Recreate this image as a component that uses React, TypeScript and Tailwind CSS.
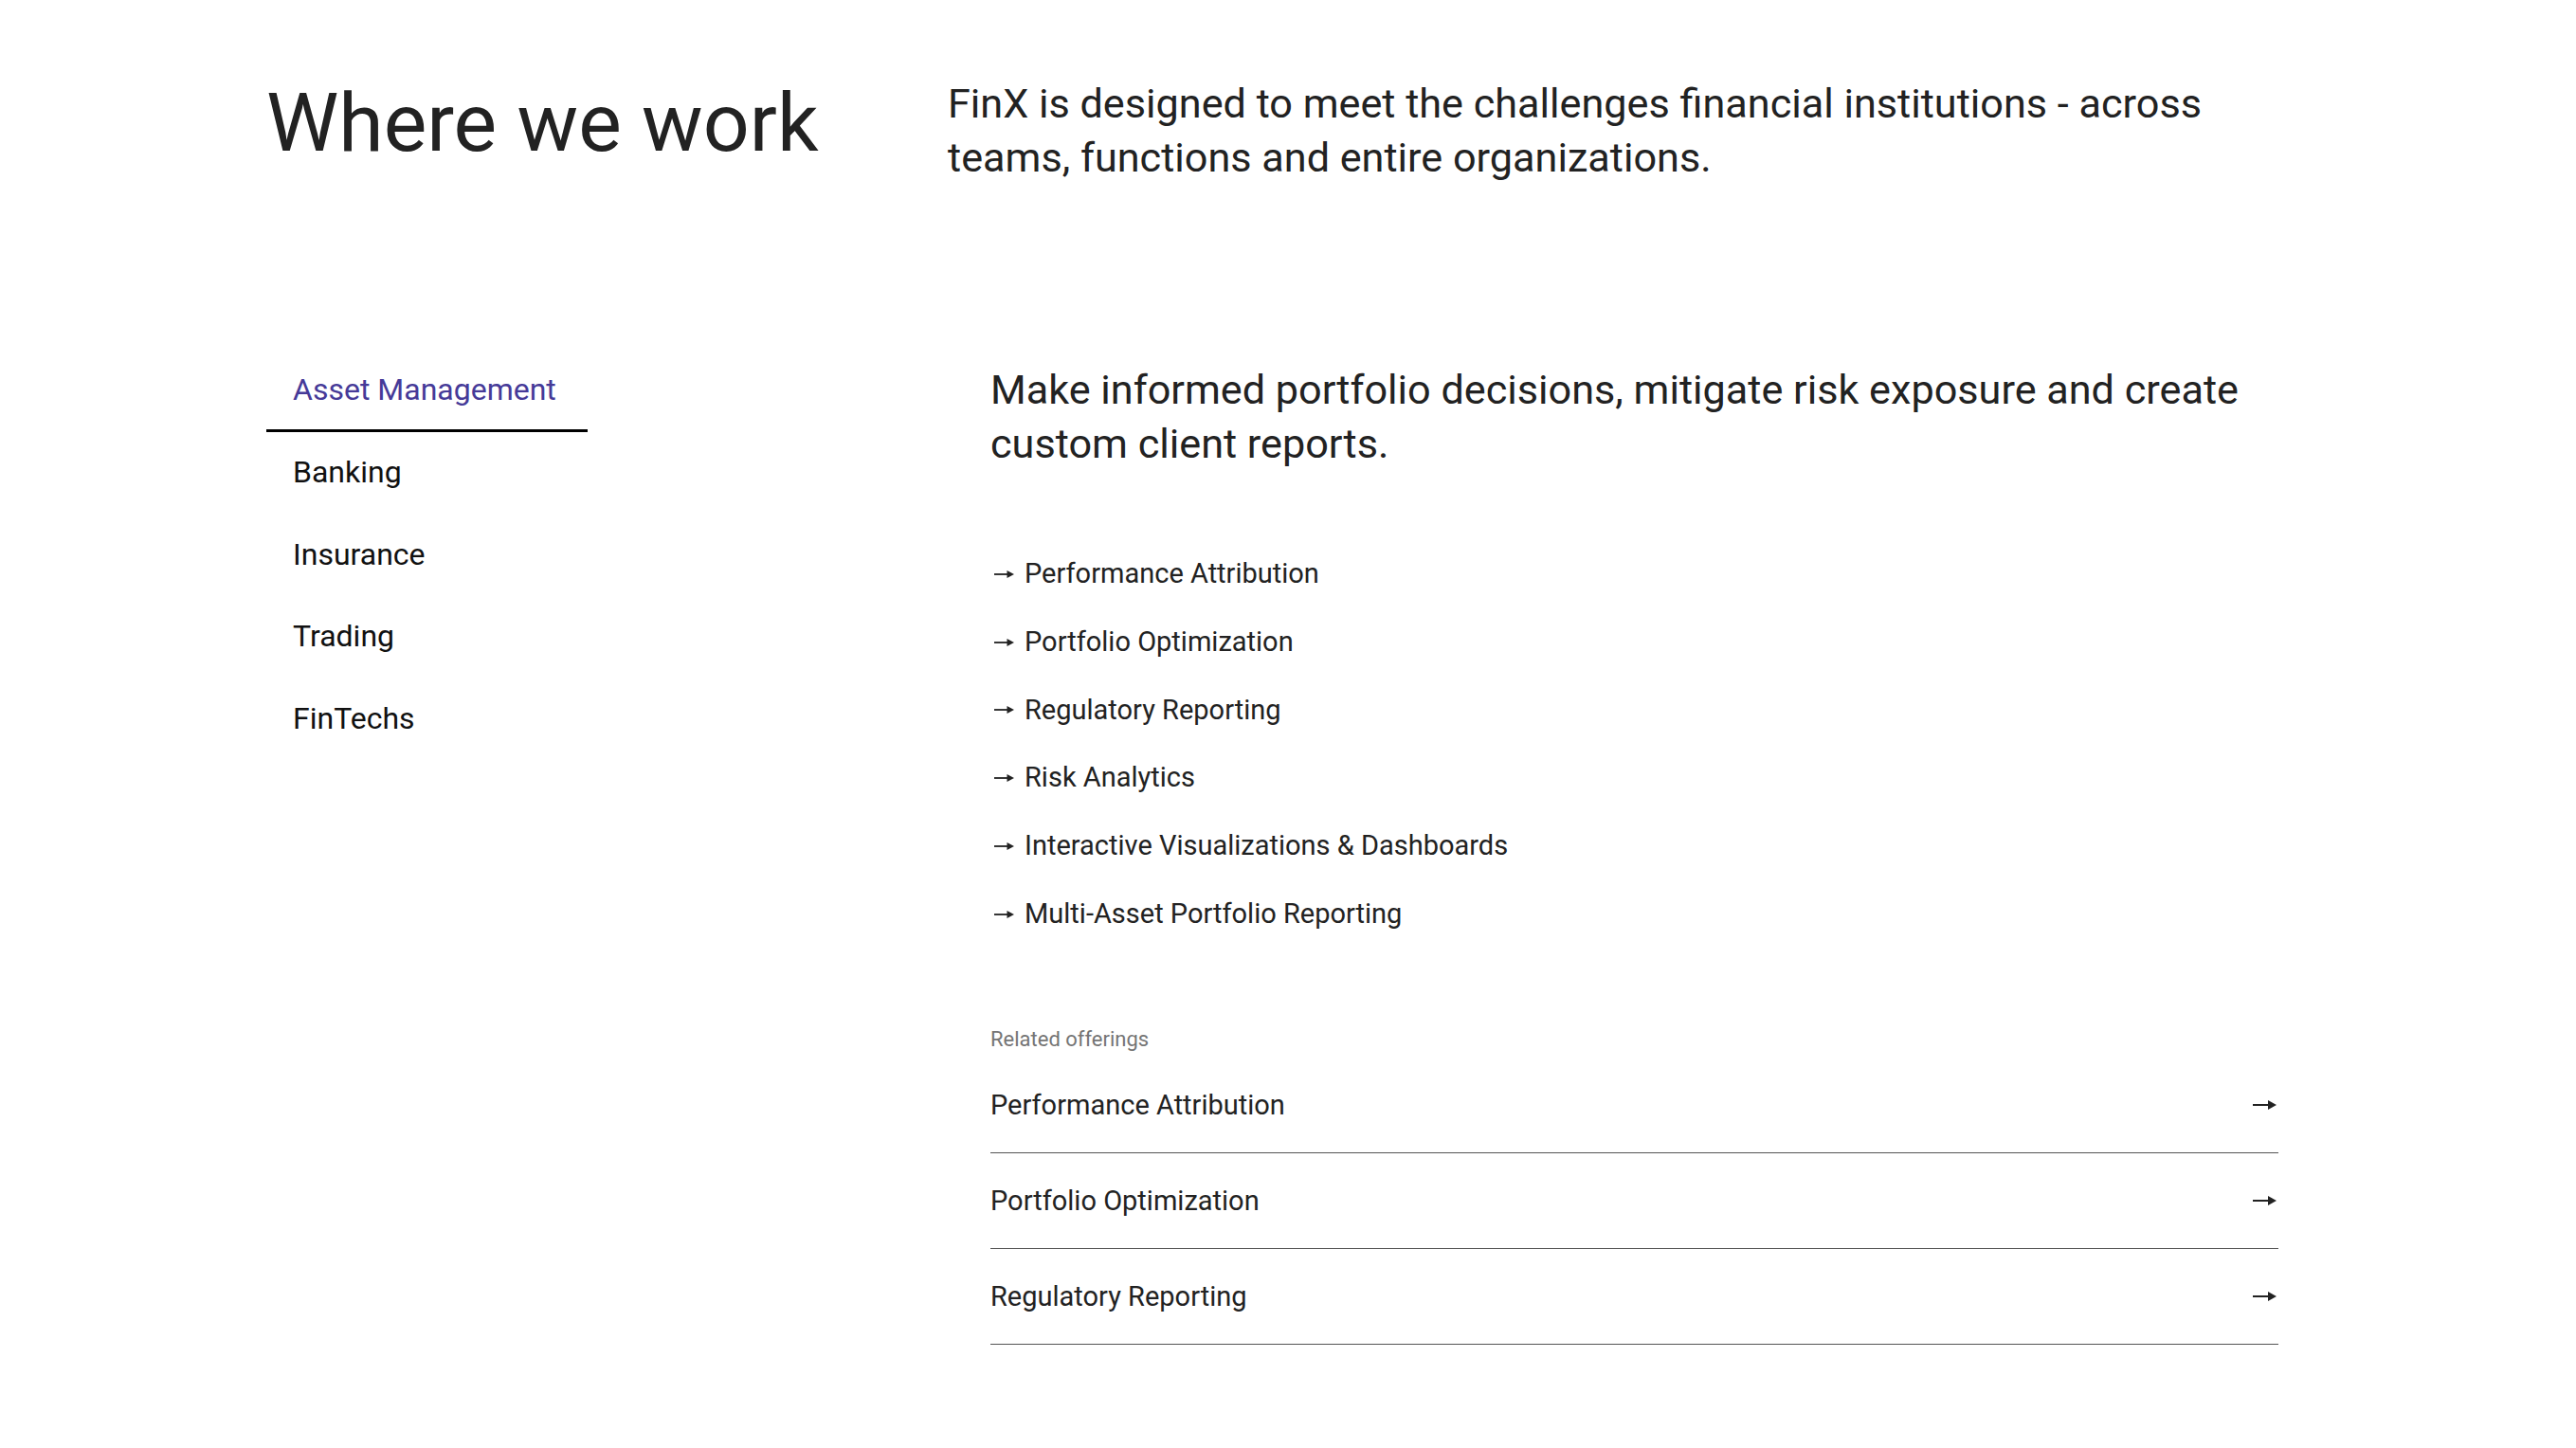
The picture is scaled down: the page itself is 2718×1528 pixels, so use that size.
import React from "react";

const navItems = ["Asset Management", "Banking", "Insurance", "Trading", "FinTechs"];
const bullets = [
  "Performance Attribution",
  "Portfolio Optimization",
  "Regulatory Reporting",
  "Risk Analytics",
  "Interactive Visualizations & Dashboards",
  "Multi-Asset Portfolio Reporting",
];
const related = ["Performance Attribution", "Portfolio Optimization", "Regulatory Reporting"];

function ArrowRight() {
  return (
    <svg width="25" height="12" viewBox="0 0 25 12" className="shrink-0">
      <rect x="0" y="5" width="18" height="2" fill="#222" />
      <path d="M16 1 L25 6 L16 11 Z" fill="#222" />
    </svg>
  );
}

function BulletArrow() {
  return (
    <svg width="21" height="10" viewBox="0 0 21 10" className="ml-[4px] mr-[11px] shrink-0">
      <rect x="0" y="4.1" width="15" height="1.8" fill="#222" />
      <path d="M13.5 1 L21 5 L13.5 9 Z" fill="#222" />
    </svg>
  );
}

export default function App() {
  return (
    <div className="min-h-screen bg-white font-[family-name:Roboto,sans-serif] text-[#222]">
      <div className="mx-auto w-[2156px] pt-[80px] pb-[80px]">
        <div className="flex items-start">
          <h1 className="w-[719px] shrink-0 text-[86px] leading-[100px] font-normal text-[#222]">
            Where we work
          </h1>
          <p className="flex-1 pt-[1px] text-[43.2px] leading-[57px] text-[#222]">
            FinX is designed to meet the challenges financial institutions - across teams, functions and entire
            organizations.
          </p>
        </div>

        <div className="mt-[174px] flex items-start">
          <nav className="flex w-[339px] shrink-0 flex-col">
            {navItems.map((item, i) => (
              <div
                key={item}
                className={
                  i === 0
                    ? "h-[87px] border-b-[3px] border-black pl-[28px] pt-[26px] text-[32px] leading-[32px] text-[#463a98]"
                    : "h-[86.6px] pl-[28px] pt-[26px] text-[32px] leading-[32px] text-[#111]"
                }
              >
                {item}
              </div>
            ))}
          </nav>

          <div className="ml-[425px] w-[1359px] pt-[14px]">
            <p className="text-[43.2px] leading-[57px] text-[#222]">
              Make informed portfolio decisions, mitigate risk exposure and create custom client reports.
            </p>

            <ul className="mt-[73px] flex flex-col">
              {bullets.map((b) => (
                <li key={b} className="flex items-center text-[29px] leading-[71.8px] text-[#222]">
                  <BulletArrow />
                  <span>{b}</span>
                </li>
              ))}
            </ul>

            <div className="mt-[84px] text-[22px] leading-[24px] text-[#757575]">Related offerings</div>
            <div className="mt-[7px] flex flex-col">
              {related.map((r) => (
                <div
                  key={r}
                  className="flex h-[101px] items-center justify-between border-b border-[#555] pr-[2px]"
                >
                  <span className="text-[29px] leading-[34px] text-[#222]">{r}</span>
                  <ArrowRight />
                </div>
              ))}
            </div>
          </div>
        </div>
      </div>
    </div>
  );
}
